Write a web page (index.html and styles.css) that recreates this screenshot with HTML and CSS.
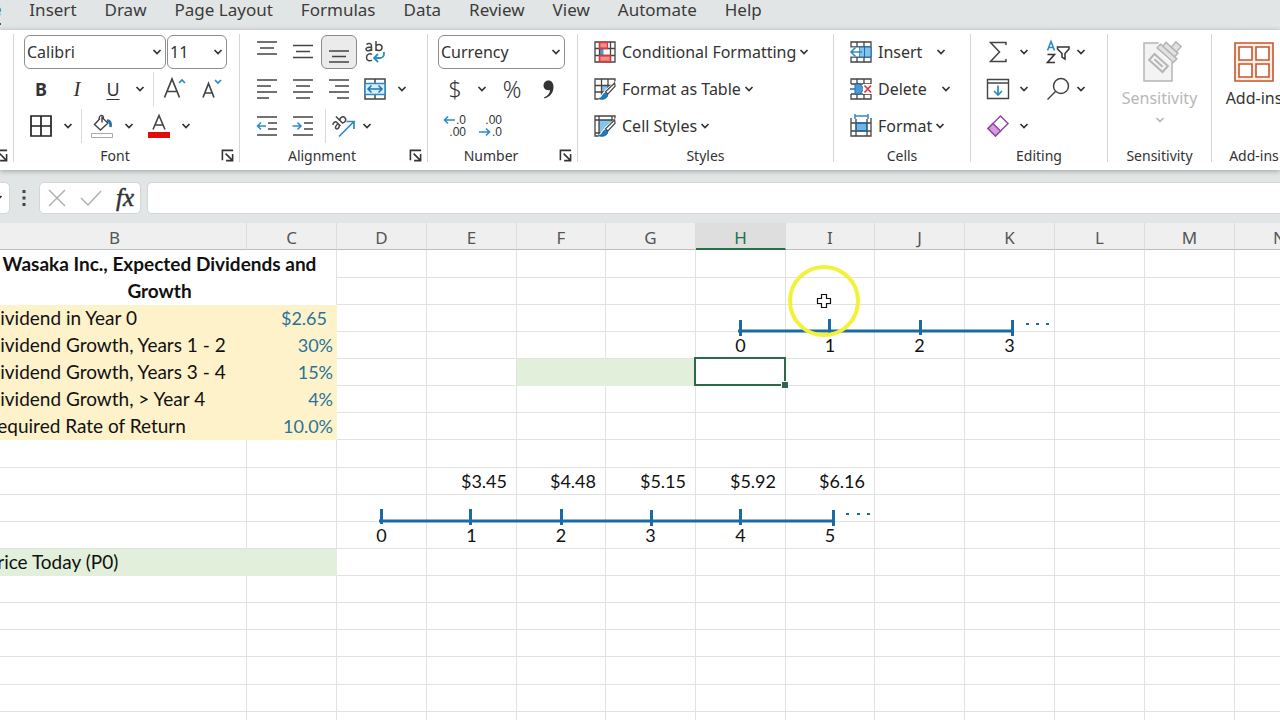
FILE: index.html
```html
<!DOCTYPE html>
<html lang="en">
<head>
  <meta charset="UTF-8">
  <meta name="viewport" content="width=device-width, initial-scale=1.0">
  <title>Dividend Growth Workbook</title>
  <link rel="stylesheet" href="styles.css">
</head>
<body>
  <!-- Shared icons -->
  <svg class="sprite" aria-hidden="true">
    <symbol id="chev" viewBox="0 0 10 10"><path d="M1.500 3 5 6.500 8.500 3" fill="none" stroke="currentColor" stroke-width="1.700"/></symbol>
    <symbol id="launch" viewBox="0 0 14 14"><path d="M1.500 12V1.500H13M5 5l7 7M12.500 5.500V12.500H5.500" fill="none" stroke="currentColor" stroke-width="1.700"/></symbol>
    <symbol id="brush" viewBox="0 0 24 24"><path d="M24 3 12 13 5 22v2h19z" fill="#fff"/><path d="M22.500 5.500 12.500 15l2.500 2.500L23 9z" fill="#fff" stroke="#444" stroke-width="1.300"/><path d="M5 22.500c4 1.500 9.500.5 10-4-1-2.500-4-2.500-5-.5-.8 2-2 4-5 4.500z" fill="#1e7ac4" stroke="#155f9c"/></symbol>
  </svg>

  <nav class="tabs">
    <a href="#" class="active">Home</a>
    <a href="#">Insert</a>
    <a href="#">Draw</a>
    <a href="#">Page Layout</a>
    <a href="#">Formulas</a>
    <a href="#">Data</a>
    <a href="#">Review</a>
    <a href="#">View</a>
    <a href="#">Automate</a>
    <a href="#">Help</a>
  </nav>

  <div class="ribbon">
    <!-- Clipboard -->
    <section class="group clipboard">
      <div class="tools"></div>
      <div class="foot"><h2></h2><button class="launch" aria-label="Clipboard settings"><svg><use href="#launch"/></svg></button></div>
    </section>

    <!-- Font -->
    <section class="group font">
      <div class="tools">
        <div class="row">
          <div class="drop font-name"><select aria-label="Font"><option>Calibri</option></select><svg class="chev"><use href="#chev"/></svg></div>
          <div class="drop font-size"><select aria-label="Font size"><option>11</option></select><svg class="chev"><use href="#chev"/></svg></div>
        </div>
        <div class="row">
          <button class="btn bold" aria-label="Bold">B</button>
          <button class="btn italic" aria-label="Italic">I</button>
          <button class="btn underline" aria-label="Underline">U</button>
          <button class="more" aria-label="Underline options"><svg class="chev"><use href="#chev"/></svg></button>
          <span class="sep"></span>
          <button class="btn" aria-label="Increase font size"><svg width="24" height="24" viewBox="0 0 24 24" fill="none" stroke="#444" stroke-width="1.700"><path d="M2.500 20.500 10 2l7.500 18.500M5 14.500h10"/><path d="M17 6l3-3 3 3" stroke="#2b8cc4"/></svg></button>
          <button class="btn" aria-label="Decrease font size"><svg width="24" height="24" viewBox="0 0 24 24" fill="none" stroke="#444" stroke-width="1.700"><path d="M5 20.500 10.500 6.500 16 20.500M7 16h7"/><path d="M17 3l3 3 3-3" stroke="#2b8cc4"/></svg></button>
        </div>
        <div class="row">
          <button class="btn" aria-label="Borders"><svg width="22" height="22" viewBox="0 0 22 22" fill="none" stroke="#222" stroke-width="1.700"><path d="M1 1h20v20H1zM11 1v20M1 11h20"/></svg></button>
          <button class="more" aria-label="Border options"><svg class="chev"><use href="#chev"/></svg></button>
          <span class="sep"></span>
          <button class="btn" aria-label="Fill color"><svg width="24" height="24" viewBox="0 0 24 24" fill="none" stroke="#444" stroke-width="1.400"><path d="M10 4.500 4.500 10.500 10.500 16l7.500-7L12 3.500v5M9 6c0-6 5-6 4.500-1"/><path d="M17 6.500c3 0 4 2 3.500 6.500" stroke="#1f6f9e" stroke-width="2.600"/><path d="M1.500 19.500h21v4h-21z" fill="#fff" stroke="#aaa" stroke-width="1"/></svg></button>
          <button class="more" aria-label="Fill color options"><svg class="chev"><use href="#chev"/></svg></button>
          <button class="btn font-color" aria-label="Font color"><svg width="24" height="24" viewBox="0 0 24 24" fill="none" stroke="#444" stroke-width="1.600"><path d="M6 15.500 12 1.500l6 14M8 11h8"/><path d="M1 18h22v6H1z" fill="#e00b0b" stroke="none"/></svg></button>
          <button class="more" aria-label="Font color options"><svg class="chev"><use href="#chev"/></svg></button>
        </div>
      </div>
      <div class="foot"><h2>Font</h2><button class="launch" aria-label="Font settings"><svg><use href="#launch"/></svg></button></div>
    </section>

    <!-- Alignment -->
    <section class="group align">
      <div class="tools">
        <div class="row">
          <button class="btn" aria-label="Top align"><svg class="lines" viewBox="0 0 22 22"><path d="M1 1h20M4 7h14M1 13h20"/></svg></button>
          <button class="btn" aria-label="Middle align"><svg class="lines" viewBox="0 0 22 22"><path d="M1 4.500h20M4 10.500h14M1 16.500h20"/></svg></button>
          <button class="btn pressed" aria-label="Bottom align"><svg class="lines" viewBox="0 0 22 22"><path d="M1 10h20M4 15.500h14M1 21h20"/></svg></button>
          <button class="btn" aria-label="Wrap text"><svg width="22" height="24" viewBox="0 0 22 24" fill="none" stroke="#444" stroke-width="1.500"><path d="M2.500 4.500c2-2 5-1 5 1.500v5M7.500 7C4 7 2 7.500 2 9.300c0 2 4 2.200 5.500-.3M12 1v10M12 6c1.500-2.500 6-2 6 1.500s-4.500 4-6 1.500M8 14.500c-2-1.500-5.500-.5-5.500 3s3.500 4 5.500 2.500"/><path d="M20 12v2c0 2.500-2 4-4 4h-5M14 14l-4 4 4 4" stroke="#2b8cc4" stroke-width="1.800"/></svg></button>
        </div>
        <div class="row">
          <button class="btn" aria-label="Align left"><svg class="lines" viewBox="0 0 22 22"><path d="M1 2h20M1 8h14M1 14h20M1 20h12"/></svg></button>
          <button class="btn" aria-label="Center"><svg class="lines" viewBox="0 0 22 22"><path d="M1 2h20M4 8h14M1 14h20M4 20h14"/></svg></button>
          <button class="btn" aria-label="Align right"><svg class="lines" viewBox="0 0 22 22"><path d="M1 2h20M7 8h14M1 14h20M9 20h12"/></svg></button>
          <button class="btn" aria-label="Merge and center"><svg width="22" height="22" viewBox="0 0 22 22" fill="none" stroke="#444" stroke-width="1.500"><path d="M1 1h20v20H1zM11 1v4M11 17v4"/><path d="M1 5.500h20v11H1z" fill="#d8eefb" stroke="#2b8cc4"/><path d="M4 11h14M7.500 7.500 4 11l3.500 3.500M14.500 7.500 18 11l-3.500 3.500" stroke="#1b78b4"/></svg></button>
          <button class="more" aria-label="Merge options"><svg class="chev"><use href="#chev"/></svg></button>
        </div>
        <div class="row">
          <button class="btn" aria-label="Decrease indent"><svg class="lines" viewBox="0 0 22 22"><path d="M1 2h20M12 8h9M12 14h9M1 20h20"/><path class="blue" d="M10 11H1.500M5 7.500 1.500 11 5 14.500"/></svg></button>
          <button class="btn" aria-label="Increase indent"><svg class="lines" viewBox="0 0 22 22"><path d="M1 2h20M12 8h9M12 14h9M1 20h20"/><path class="blue" d="M.5 11H9M5.500 7.500 9 11l-3.500 3.500"/></svg></button>
          <span class="sep"></span>
          <button class="btn snug" aria-label="Orientation"><svg width="24" height="24" viewBox="0 0 24 24" fill="none" stroke="#444" stroke-width="1.500"><g transform="translate(1 12) rotate(-45)"><path d="M1.500 0c1.500-2 4.500-1 4.500 1v5M6 2.500C3 2.500 1 3 1 4.500c0 2 3.500 2 5-.3M9.500-4v10M9.500 2c1-2.500 5.500-2 5.500 1.200S10.500 7 9.500 4.500"/></g><path d="M8 22.500 23 7.500M15.500 7.500H23V15" stroke="#2b8cc4" stroke-width="1.700"/></svg></button>
          <button class="more" aria-label="Orientation options"><svg class="chev"><use href="#chev"/></svg></button>
        </div>
      </div>
      <div class="foot"><h2>Alignment</h2><button class="launch" aria-label="Alignment settings"><svg><use href="#launch"/></svg></button></div>
    </section>

    <!-- Number -->
    <section class="group number">
      <div class="tools">
        <div class="row">
          <div class="drop format"><select aria-label="Number format"><option>Currency</option></select><svg class="chev"><use href="#chev"/></svg></div>
        </div>
        <div class="row">
          <button class="btn sign" aria-label="Currency">$</button>
          <button class="more" aria-label="Currency options"><svg class="chev"><use href="#chev"/></svg></button>
          <button class="btn sign percent" aria-label="Percent">%</button>
          <button class="btn" aria-label="Comma style"><svg width="14" height="20" viewBox="0 0 14 20"><path d="M3 18.500C7 17 9 14 9 11 5 12 2.500 9.500 2.500 6.500 2.500 3.500 5 1.500 7.500 1.500c3 0 5 2.500 5 6.500 0 5.500-3.500 10-9 11.500z" fill="#333"/></svg></button>
        </div>
        <div class="row">
          <button class="btn decimals" aria-label="Increase decimal"><span>.0</span><span>.00</span><svg class="arrow up" viewBox="0 0 12 10"><path d="M12 5H1.500M5 1.500 1.500 5 5 8.500"/></svg></button>
          <button class="btn decimals" aria-label="Decrease decimal"><span>.00</span><span>.0</span><svg class="arrow down" viewBox="0 0 12 10"><path d="M0 5h10.500M7 1.500 10.500 5 7 8.500"/></svg></button>
        </div>
      </div>
      <div class="foot"><h2>Number</h2><button class="launch" aria-label="Number settings"><svg><use href="#launch"/></svg></button></div>
    </section>

    <!-- Styles -->
    <section class="group styles">
      <div class="tools">
        <button class="item"><svg class="ico" viewBox="0 0 22 22"><path d="M1 1h20v20H1z" fill="#fff"/><path d="M5.500 1h8v6h-8zM5.500 15h11v6h-11z" fill="#f9898b"/><path d="M5.500 7.500h4v7h-4z" fill="#4a9ad8"/><path d="M1 1h20v20H1zM1 7.500h20M1 14.500h20M5.500 1v20M16.500 1v20" fill="none" stroke="#444" stroke-width="1.300"/><path d="M5.500 1.500h8v6h-8zM5.500 14.500h11v6h-11z" fill="none" stroke="#d93a3c" stroke-width="1.300"/></svg>Conditional Formatting<svg class="chev"><use href="#chev"/></svg></button>
        <button class="item"><svg class="ico" viewBox="0 0 22 22"><path d="M7.500 7.500H21V21H7.500z" fill="#83c3f0"/><path d="M1 1h20v20H1zM1 7.500h20M1 14h20M7.500 1v20M14 1v20" fill="none" stroke="#444" stroke-width="1.300"/><use href="#brush" width="22" height="22"/></svg>Format as Table<svg class="chev"><use href="#chev"/></svg></button>
        <button class="item"><svg class="ico" viewBox="0 0 22 22"><path d="M5 5h13v13H5z" fill="#83c3f0"/><path d="M1 1h20v20H1zM1 5h20M1 18h20M5 1v20M18 1v20" fill="none" stroke="#444" stroke-width="1.300"/><use href="#brush" width="22" height="22"/></svg>Cell Styles<svg class="chev"><use href="#chev"/></svg></button>
      </div>
      <div class="foot"><h2>Styles</h2></div>
    </section>

    <!-- Cells -->
    <section class="group cells">
      <div class="tools">
        <button class="item split"><svg class="ico" viewBox="0 0 22 22"><path d="M1 1h20v20H1zM1 6h20M1 16h20M7 1v20M14 1v20" fill="none" stroke="#444" stroke-width="1.300"/><path d="M9 6h12v10H9z" fill="#83c3f0" stroke="#1f6fb0"/><path d="M14.500 6v10" stroke="#1f6fb0"/><path d="M0 6.500h9v9H0z" fill="#fff"/><path d="M12 11H1M5.500 6.500 1 11l4.500 4.500" fill="none" stroke="#2b8cc4" stroke-width="1.600"/></svg>Insert<svg class="chev"><use href="#chev"/></svg></button>
        <button class="item split"><svg class="ico" viewBox="0 0 22 22"><path d="M1 6V1h20v5M1 16v5h20v-5M7 1v5M14 1v5M7 16v5M14 16v5M1 6h20M1 16h20" fill="none" stroke="#444" stroke-width="1.300"/><path d="M5 6h5l4 5-4 5H5z" fill="#4a9ad8" stroke="#1f6fb0"/><path d="M0 11h5" stroke="#1f6fb0" stroke-width="1.500"/><path d="M13 6h9v10h-9z" fill="#fff"/><path d="M14.500 7.500l6.500 7M21 7.500l-6.500 7" stroke="#e0393e" stroke-width="1.800"/></svg>Delete<svg class="chev"><use href="#chev"/></svg></button>
        <button class="item"><svg class="ico" viewBox="0 0 22 22"><path d="M6 8h11v8H6z" fill="#6db6ea"/><path d="M1 3v18h20V3M1 8h20M1 16h20M6 4v17M17 4v17" fill="none" stroke="#444" stroke-width="1.300"/><path d="M6 8h11v8H6z" fill="none" stroke="#1f6fb0"/><path d="M5 1h13M5-1v5M18-1v5" stroke="#2b8cc4" stroke-width="1.500"/></svg>Format<svg class="chev"><use href="#chev"/></svg></button>
      </div>
      <div class="foot"><h2>Cells</h2></div>
    </section>

    <!-- Editing -->
    <section class="group editing">
      <div class="tools">
        <div class="row">
          <button class="btn" aria-label="AutoSum"><svg width="20" height="22" viewBox="0 0 20 22" fill="none" stroke="#444" stroke-width="1.500"><path d="M18 4V1.500H2.500L11.500 11 2.500 20.500H18V18"/></svg></button>
          <button class="more" aria-label="AutoSum options"><svg class="chev"><use href="#chev"/></svg></button>
          <button class="btn snug" aria-label="Sort and filter"><svg width="24" height="24" viewBox="0 0 24 24" fill="none" stroke="#333" stroke-width="1.600"><path d="M1.500 10.500 5 1.500l3.500 9M2.500 7.500h5" stroke="#2b8cc4"/><path d="M1.500 14.500h7L1.500 22.500h7.500"/><path d="M11.500 7h11.500v2l-4 4.500v5.500l-3-2v-3.500l-4.500-4.500z" stroke-width="1.500"/></svg></button>
          <button class="more" aria-label="Sort options"><svg class="chev"><use href="#chev"/></svg></button>
        </div>
        <div class="row">
          <button class="btn" aria-label="Fill"><svg width="24" height="22" viewBox="0 0 24 22" fill="none" stroke="#444" stroke-width="1.400"><path d="M1.500 1.500h21v19h-21zM1.500 5h21"/><path d="M12 7.500V17M8 13l4 4 4-4" stroke="#2b8cc4" stroke-width="1.700"/></svg></button>
          <button class="more" aria-label="Fill options"><svg class="chev"><use href="#chev"/></svg></button>
          <button class="btn snug" aria-label="Find and select"><svg width="24" height="24" viewBox="0 0 24 24" fill="none" stroke="#444" stroke-width="1.500"><circle cx="15" cy="9" r="7.500"/><path d="M9.500 14.500 1.500 22.500"/></svg></button>
          <button class="more" aria-label="Find options"><svg class="chev"><use href="#chev"/></svg></button>
        </div>
        <div class="row">
          <button class="btn" aria-label="Clear"><svg width="24" height="24" viewBox="0 0 24 24" fill="#fff" stroke="#8e4aa0" stroke-width="1.500"><path d="M14.500 2 22 9.500 9.500 22 2 14.500z"/><path d="M7 9.500 14.500 17 9.500 22 2 14.500z" fill="#d69bdf"/></svg></button>
          <button class="more" aria-label="Clear options"><svg class="chev"><use href="#chev"/></svg></button>
        </div>
      </div>
      <div class="foot"><h2>Editing</h2></div>
    </section>

    <!-- Sensitivity -->
    <section class="group sensitivity">
      <button class="big" disabled>
        <svg width="40" height="44" viewBox="0 0 40 44" fill="#f3f3f3" stroke="#b5b5b5" stroke-width="1.500"><path d="M4 4h28v38H4z"/><path d="M20 0h22v23H31l-7-5-7-9z" fill="#fff" stroke="none"/><g transform="translate(18.500 24) rotate(42)"><path d="M-9-4H9V4H-9z" stroke-width="2"/><path d="M-5.500 0h11" stroke-width="2"/></g><g transform="translate(30 11) rotate(42)"><path d="M-11 2H11V7H-11zM-8-3H8v5H-8z" fill="#e2e2e2"/><path d="M-1-10h7v7h-7z" fill="#e2e2e2"/></g></svg>
        <span>Sensitivity</span>
        <svg class="chev"><use href="#chev"/></svg>
      </button>
      <div class="foot"><h2>Sensitivity</h2></div>
    </section>

    <!-- Add-ins -->
    <section class="group addins">
      <button class="big">
        <svg width="40" height="44" viewBox="0 0 40 44" fill="#fff" stroke="#c8562b" stroke-width="1.600"><path d="M1 4h38v38H1z" fill="#fdeee6"/><path d="M5 8h13v13H5zM22 8h13v13H22zM5 25h13v13H5zM22 25h13v13H22z"/></svg>
        <span>Add-ins</span>
      </button>
      <div class="foot"><h2>Add-ins</h2></div>
    </section>
  </div>

  <!-- Formula bar -->
  <div class="formula-bar">
    <div class="name-box"><svg class="chev"><use href="#chev"/></svg></div>
    <svg class="grip" width="4" height="18" viewBox="0 0 4 18"><path d="M.5 1h3v3h-3zM.5 7.500h3v3h-3zM.5 14h3v3h-3z" fill="#444"/></svg>
    <div class="fx-box">
      <button aria-label="Cancel"><svg width="18" height="18" viewBox="0 0 18 18"><path d="M1 1l16 16M17 1 1 17"/></svg></button>
      <button aria-label="Enter"><svg width="22" height="16" viewBox="0 0 22 16"><path d="M1 8l7 7L21 1"/></svg></button>
      <button class="fx" aria-label="Insert function">fx</button>
    </div>
    <input type="text" aria-label="Formula">
  </div>

  <!-- Sheet -->
  <main class="sheet">
    <table>
      <colgroup>
        <col class="wide"><col><col><col><col class="narrow"><col><col><col class="narrow"><col><col><col><col><col>
      </colgroup>
      <thead><tr id="letters"></tr></thead>
      <tbody id="cells"></tbody>
    </table>

    <!-- Timelines drawn over the cells -->
    <svg class="shapes" viewBox="0 0 1280 497">
      <g stroke="#1a6aa3" stroke-width="3">
        <path d="M738 108h275M740.500 97v16M829.500 96v16M920.500 97v15M1012.500 97v16"/>
        <path d="M379 298h454M381.500 286v15M470.500 286v16M561.500 286v16M651.500 287v16M740.500 286v16M833.500 287v16"/>
      </g>
      <path d="M1026 101h3M1036 101h3M1046 101h3M846 291h3M857 291h3M867 291h3" stroke="#1a6aa3" stroke-width="2"/>
    </svg>

    <!-- Pointer with highlight ring -->
    <div class="pointer">
      <svg width="14" height="14" viewBox="0 0 14 14"><path d="M4.500.5h5v4h4v5h-4v4h-5v-4h-4v-5h4z" fill="#fff" stroke="#111" stroke-width="1.200"/></svg>
    </div>
  </main>

  <script>
    const columns = "BCDEFGHIJKLMN".split("");
    const rowCount = 18;

    // text, then the classes of the cell
    const data = {
      B3: ["Dividend in Year 0", "input"], C3: ["$2.65", "input value money"],
      B4: ["Dividend Growth, Years 1 - 2", "input"], C4: ["30%", "input value"],
      B5: ["Dividend Growth, Years 3 - 4", "input"], C5: ["15%", "input value"],
      B6: ["Dividend Growth, &gt; Year 4", "input"], C6: ["4%", "input value"],
      B7: ["Required Rate of Return", "input"], C7: ["10.0%", "input value"],
      H4: ["0", "mid"], I4: ["1", "mid"], J4: ["2", "mid"], K4: ["3", "mid"],
      F5: ["", "result"], G5: ["", "result"], H5: ["", "selected"],
      E9: ["$3.45", "money"], F9: ["$4.48", "money"], G9: ["$5.15", "money"],
      H9: ["$5.92", "money"], I9: ["$6.16", "money"],
      D11: ["0", "mid"], E11: ["1", "mid"], F11: ["2", "mid"],
      G11: ["3", "mid"], H11: ["4", "mid"], I11: ["5", "mid"],
      B12: ["Price Today (P0)", "result"], C12: ["", "result"]
    };

    document.getElementById("letters").innerHTML = columns
      .map(c => `<th scope="col"${c === "H" ? ' class="current"' : ""}>${c}</th>`).join("");

    let html = "";
    for (let r = 1; r <= rowCount; r++) {
      html += "<tr>";
      columns.forEach(c => {
        // B1:C2 is one merged title cell
        if (r <= 2 && (c === "B" || c === "C")) {
          if (r === 1 && c === "B") {
            html += '<td class="title" colspan="2" rowspan="2">Wasaka Inc., Expected Dividends and Growth</td>';
          }
          return;
        }
        const [text, cls] = data[c + r] || ["", ""];
        html += `<td class="${cls}">${text}</td>`;
      });
      html += "</tr>";
    }
    document.getElementById("cells").innerHTML = html;
  </script>
</body>
</html>
```

FILE: styles.css
```css
* {
  box-sizing: border-box;
}

body {
  margin: 0;
  height: 100vh;
  display: flex;
  flex-direction: column;
  overflow: hidden;
  background: #e2e5e5;
  color: #333;
  font-family: "Noto Sans", "Open Sans", sans-serif;
  font-size: 16px;
}

button {
  border: 0;
  padding: 0;
  background: none;
  color: inherit;
  font: inherit;
}

svg {
  flex: none;
  overflow: visible;
}

.sprite {
  position: absolute;
  width: 0;
  height: 0;
}

.chev {
  width: 10px;
  height: 10px;
}

/* Tabs */
.tabs {
  display: flex;
  flex: none;
  gap: 28px;
  height: 30px;
  margin-left: -49px;
}

.tabs a {
  height: 25px;
  line-height: 20px;
  font-size: 17px;
  color: #3b3b3b;
  text-decoration: none;
  white-space: nowrap;
}

.tabs .active {
  font-weight: bold;
  color: #1e6b4a;
  border-bottom: 2px solid #1e6b4a;
}

/* Ribbon */
.ribbon {
  display: flex;
  flex: none;
  height: 140px;
  padding: 4px 0 8px;
  background: #fff;
  box-shadow: 0 1px 5px rgba(0, 0, 0, 0.3);
}

.group {
  display: flex;
  flex: none;
  flex-direction: column;
  justify-content: space-between;
  border-right: 1px solid #d6d6d6;
}

.clipboard { width: 14px; align-items: flex-end; }
.font { width: 226px; }
.align { width: 188px; }
.number { width: 150px; }
.styles { width: 256px; }
.cells { width: 137px; }
.editing { width: 137px; }
.sensitivity { width: 104px; }
.addins { width: 85px; }

.tools {
  display: flex;
  flex-direction: column;
  gap: 1px;
}

.row {
  display: flex;
  align-items: center;
  height: 36px;
  padding-left: 9px;
}

.foot {
  display: flex;
  align-items: center;
  height: 13px;
}

.foot h2 {
  flex: 1;
  margin: 0;
  font-size: 14px;
  font-weight: normal;
  line-height: 20px;
  text-align: center;
}

.launch {
  width: 23px;
  height: 13px;
}

.launch svg {
  display: block;
  width: 13px;
  height: 13px;
  margin: 0 5px;
}

.btn,
.more {
  display: flex;
  flex: none;
  align-items: center;
  justify-content: center;
  width: 36px;
  height: 34px;
}

.more {
  width: 18px;
}

.snug {
  width: 30px;
}

.sep {
  width: 1px;
  height: 34px;
  margin: 0 2px 0 4px;
  background: #d9d9d9;
}

.bold {
  font-size: 18px;
  font-weight: bold;
}

.italic {
  font: italic 21px "Liberation Serif", serif;
}

.underline {
  font-size: 18px;
  text-decoration: underline;
  text-underline-offset: 3px;
}

.font-color,
.percent {
  margin-left: 3px;
}

.sign {
  font-size: 23px;
  font-weight: 300;
}

.pressed {
  border: 1px solid #8a8a8a;
  border-radius: 6px;
  background: #ebebeb;
}

.lines {
  width: 22px;
  height: 22px;
  fill: none;
  stroke: #444;
  stroke-width: 1.5;
}

.lines .blue {
  stroke: #2b8cc4;
}

.decimals {
  position: relative;
  flex-direction: column;
  align-items: flex-end;
  padding-right: 7px;
  font-family: "Liberation Sans", sans-serif;
  font-size: 12px;
  line-height: 12px;
}

.arrow {
  position: absolute;
  left: 6px;
  width: 12px;
  height: 10px;
  fill: none;
  stroke: #2b8cc4;
  stroke-width: 1.6;
}

.up { top: 6px; }
.down { bottom: 6px; }

.drop {
  position: relative;
  height: 34px;
  margin-left: 1px;
}

.drop select {
  width: 100%;
  height: 100%;
  padding: 0 2px;
  border: 1px solid #8e8e8e;
  border-radius: 6px;
  background: #fff;
  color: #333;
  font: inherit;
  appearance: none;
}

.drop .chev {
  position: absolute;
  right: 4px;
  top: 12px;
}

.font-name { width: 142px; }
.font-size { width: 60px; }
.format { width: 127px; }

.item {
  display: flex;
  align-items: center;
  height: 36px;
  padding-left: 16px;
  white-space: nowrap;
}

.ico {
  width: 22px;
  height: 22px;
  margin-right: 6px;
}

.item .chev {
  margin-left: 3px;
}

.split .chev {
  margin-left: 14px;
}

.editing .more {
  width: 16px;
}

.editing .snug {
  margin-left: 11px;
}

.big {
  display: flex;
  flex-direction: column;
  align-items: center;
  padding-top: 5px;
}

.big span {
  line-height: 30px;
}

.big:disabled {
  color: #b8b8b8;
}

.sensitivity .chev {
  margin-top: 2px;
}

/* Formula bar */
.formula-bar {
  display: flex;
  flex: none;
  align-items: center;
  height: 53px;
  padding-top: 2px;
}

.name-box,
.fx-box,
.formula-bar input {
  height: 32px;
  border: 1px solid #d4d6d6;
  border-radius: 5px;
  background: #fff;
}

.name-box {
  display: flex;
  align-items: center;
  width: 20px;
  margin-left: -10px;
  padding-left: 2px;
}

.grip {
  margin: 0 13px 0 12px;
}

.fx-box {
  display: flex;
  align-items: center;
  justify-content: space-between;
  width: 102px;
  margin-right: 6px;
  padding: 0 6px 0 8px;
}

.fx-box svg {
  display: block;
  fill: none;
  stroke: #b0b0b0;
  stroke-width: 1.5;
}

.fx-box .fx {
  font: italic 25px "Liberation Serif", serif;
  -webkit-text-stroke: 0.5px #333;
}

.formula-bar input {
  flex: 1;
  min-width: 0;
  border-right: 0;
  border-radius: 5px 0 0 5px;
}

/* Sheet */
.sheet {
  position: relative;
  flex: 1;
  overflow: hidden;
  background: #fff;
}

table {
  width: 1341px;
  margin-left: -17px;
  border-collapse: separate;
  border-spacing: 0;
  table-layout: fixed;
}

col { width: 90px; }
.wide { width: 264px; }
.narrow { width: 89px; }

th {
  height: 27px;
  padding: 4px 0 0;
  border-right: 1px solid #dcdcdc;
  border-bottom: 1px solid #bdbdbd;
  background: #efefef;
  color: #555;
  font-size: 17px;
  font-weight: normal;
  line-height: 20px;
}

.current {
  border-bottom: 2px solid #217346;
  background: #dedede;
  color: #217346;
}

td {
  height: 27px;
  padding: 0 3px;
  border-right: 1px solid #e2e2e2;
  border-bottom: 1px solid #e2e2e2;
  color: #111;
  font-family: Lato, sans-serif;
  font-size: 19px;
  line-height: 26px;
  white-space: nowrap;
}

tbody tr:nth-child(8n) td {
  height: 28px;
}

.title {
  border-bottom-color: #fff;
  font-weight: bold;
  line-height: 27px;
  text-align: center;
  white-space: normal;
}

.input {
  border-color: #fef2cb;
  background: #fef2cb;
}

.result {
  border-color: #e2efda;
  background: #e2efda;
}

.value,
.money,
.mid {
  font-size: 18px;
}

.value {
  color: #2a7299;
  text-align: right;
}

.money {
  padding-right: 9px;
  text-align: right;
}

.mid {
  text-align: center;
}

.selected {
  position: relative;
}

.selected::before {
  content: "";
  position: absolute;
  inset: -2px -1px -1px -2px;
  border: 2px solid #2a6a4b;
}

.selected::after {
  content: "";
  position: absolute;
  right: -3px;
  bottom: -3px;
  width: 6px;
  height: 6px;
  background: #2a6a4b;
  box-shadow: 0 0 0 1px #fff;
}

.shapes {
  position: absolute;
  left: 0;
  top: 0;
  width: 1280px;
  height: 497px;
  fill: none;
}

.pointer {
  position: absolute;
  left: 788px;
  top: 42px;
  display: flex;
  align-items: center;
  justify-content: center;
  width: 72px;
  height: 72px;
  border: 4px solid #f2f23a;
  border-radius: 50%;
}
```
